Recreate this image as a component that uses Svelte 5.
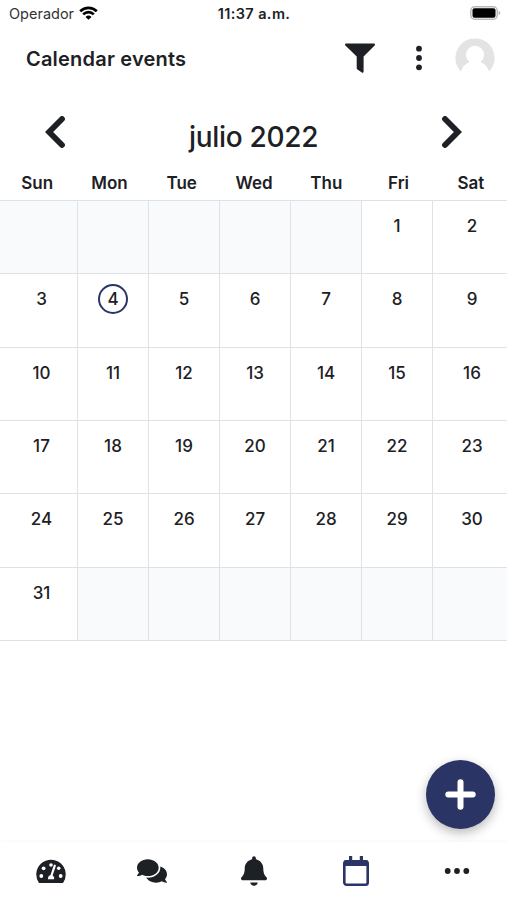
<script lang="ts">
  interface Day {
    num: number | null;
    today?: boolean;
  }

  const weekdays = ['Sun', 'Mon', 'Tue', 'Wed', 'Thu', 'Fri', 'Sat'];

  const firstWeekday = 5;
  const daysInMonth  = 31;
  const today        = 4;

  const days: Day[] = Array.from({ length: 42 }, (_, i) => {
    const num = i - firstWeekday + 1;
    return num >= 1 && num <= daysInMonth ? { num, today: num === today } : { num: null };
  });
</script>

<div class="screen">
  <div class="status">
    <div class="carrier">
      <span>Operador</span>
      <svg width="19" height="14" viewBox="0 0 19 14" fill="none" stroke="#000" stroke-width="2.7" aria-hidden="true">
        <path d="M1.2 5.2a11.8 11.8 0 0 1 16.6 0"/>
        <path d="M4.2 8.4a7.5 7.5 0 0 1 10.6 0"/>
        <path d="M9.5 13.8 6.5 10.9a4.3 4.3 0 0 1 6 0z" fill="#000" stroke="none"/>
      </svg>
    </div>
    <span class="clock">11:37 a.m.</span>
    <svg class="battery" width="31" height="14" viewBox="0 0 31 14" aria-hidden="true">
      <rect x="0.8" y="0.8" width="26.4" height="12.4" rx="3.8" fill="#fff" stroke="#bababa" stroke-width="1.5"/>
      <rect x="2.5" y="2.2" width="23" height="9.6" rx="2" fill="#000"/>
      <path d="M28.6 4.8c2.2.7 2.2 3.7 0 4.4z" fill="#b4b4b4"/>
    </svg>
  </div>

  <header>
    <h1>Calendar events</h1>
    <button class="filter" aria-label="Filter">
      <svg width="30" height="30" viewBox="0 0 30 30" fill="#1d2125" aria-hidden="true">
        <path d="M1.2 0.5h27.6c1.1 0 1.6 1.3.8 2.1L18.6 13.5v15c0 1.2-.9 1.7-1.8 1.1l-4.3-3c-.5-.3-.8-.8-.8-1.3V13.5L.4 2.6C-.4 1.8.1.5 1.2.5z"/>
      </svg>
    </button>
    <button class="more" aria-label="More options">
      <svg width="6" height="26" viewBox="0 0 6 26" fill="#1d2125" aria-hidden="true">
        <circle cx="3" cy="3.7" r="2.9"/>
        <circle cx="3" cy="13" r="2.9"/>
        <circle cx="3" cy="22.3" r="2.9"/>
      </svg>
    </button>
    <svg width="40" height="40" viewBox="0 0 40 40" aria-hidden="true">
      <path d="M6 33.7A19.6 19.6 0 1 1 34 33.7C32.5 28.5 29.5 25.5 25.5 24.3A9 9.3 0 1 0 14.5 24.3C10.5 25.5 7.5 28.5 6 33.7z" fill="#e3e3e4"/>
    </svg>
  </header>

  <div class="month">
    <button aria-label="Previous month">
      <svg width="20" height="32" viewBox="0 0 20 32" fill="none" stroke="#1d2125"
           stroke-width="5.8" stroke-linecap="round" stroke-linejoin="miter" aria-hidden="true">
        <polyline points="17 3 4.1 16 17 29"/>
      </svg>
    </button>
    <h2>julio 2022</h2>
    <button aria-label="Next month">
      <svg width="20" height="32" viewBox="0 0 20 32" fill="none" stroke="#1d2125"
           stroke-width="5.8" stroke-linecap="round" stroke-linejoin="miter" aria-hidden="true">
        <polyline points="3 3 15.9 16 3 29"/>
      </svg>
    </button>
  </div>

  <div class="weekdays">
    {#each weekdays as name}
      <span>{name}</span>
    {/each}
  </div>

  <div class="days">
    {#each days as day}
      <div class="day" class:blank={day.num === null}>
        {#if day.num !== null}
          <span class:today={day.today}>{day.num}</span>
        {/if}
      </div>
    {/each}
  </div>

  <div class="fab-row">
    <button class="fab" aria-label="New event">
      <svg width="31" height="31" viewBox="0 0 31 31" fill="none" stroke="#fff" stroke-width="6"
           stroke-linecap="round" aria-hidden="true">
        <path d="M15.5 3.3v24.4M3.3 15.5h24.4"/>
      </svg>
    </button>
  </div>

  <nav>
    <button aria-label="Dashboard">
      <svg width="30" height="30" viewBox="0 0 30 30" aria-hidden="true">
        <path d="M2.7 26.5A14.7 14.7 0 1 1 27.3 26.5Q26.9 27 26.2 27H3.8Q3.1 27 2.7 26.5z" fill="#1d2125"/>
        <g fill="#fff">
          <circle cx="5.3" cy="20" r="1.9"/>
          <circle cx="7.6" cy="12.3" r="1.9"/>
          <circle cx="15" cy="9" r="1.8"/>
          <circle cx="22.7" cy="12.3" r="1.8"/>
          <circle cx="24.7" cy="20" r="1.9"/>
          <path d="M12 23.3V21.5a3.1 3.1 0 0 1 6.1 0v1.8z"/>
        </g>
        <path d="M15.3 20 18.8 9.7" stroke="#fff" stroke-width="2.2" stroke-linecap="round"/>
      </svg>
    </button>
    <button aria-label="Messages">
      <svg width="30" height="30" viewBox="0 0 576 512" aria-hidden="true">
        <path fill="#1d2125" d="M416 192c0-88.400-93.100-160-208-160S0 103.600 0 192c0 34.300 14.100 65.900 38 92-13.400 30.200-35.500 54.200-35.800 54.500-2.200 2.300-2.800 5.700-1.500 8.700S4.800 352 8 352c36.600 0 66.900-12.300 88.700-25 32.200 15.700 70.300 25 111.300 25 114.900 0 208-71.600 208-160zm122 220c23.900-26 38-57.700 38-92 0-66.900-53.500-124.200-129.300-148.100.9 6.600 1.300 13.300 1.300 20.100 0 105.900-107.700 192-240 192-10.800 0-21.300-.8-31.700-1.900C207.800 439.600 281.800 480 368 480c41 0 79.100-9.200 111.300-25 21.800 12.700 52.100 25 88.700 25 3.200 0 6.100-1.900 7.300-4.800 1.300-2.900.7-6.300-1.500-8.700-.3-.3-22.400-24.200-35.800-54.500z"/>
      </svg>
    </button>
    <button aria-label="Notifications">
      <svg width="26" height="30" viewBox="0 0 448 512" aria-hidden="true">
        <path fill="#1d2125" d="M224 512c35.300 0 63.900-28.700 63.900-56H160c0 27.300 28.700 56 64 56zm215.400-149.700c-19.300-20.800-55.500-52-55.500-154.300 0-77.700-54.500-139.900-127.900-155.200V32c0-17.700-14.300-32-32-32s-32 14.300-32 32v20.800C118.600 68.100 64.100 130.300 64.100 208c0 102.300-36.200 133.500-55.500 154.300-6 6.400-8.700 14.200-8.600 21.700.1 16.400 13 32 32.100 32h383.800c19.100 0 32-15.600 32.100-32 .1-7.500-2.600-15.300-8.600-21.700z"/>
      </svg>
    </button>
    <button aria-label="Calendar">
      <svg width="28" height="32" viewBox="0 0 28 32" aria-hidden="true">
        <rect x="2.3" y="6.3" width="23.4" height="23.4" rx="2.2" fill="none" stroke="#2a3565" stroke-width="2.600"/>
        <path d="M2 5.500h24v5.500H2zM7 1h3.200v6H7zM17.800 1h3.200v6h-3.200z" fill="#2a3565"/>
      </svg>
    </button>
    <button aria-label="More">
      <svg width="26" height="6" viewBox="0 0 26 6" fill="#1d2125" aria-hidden="true">
        <circle cx="3.7" cy="3" r="2.9"/>
        <circle cx="13" cy="3" r="2.9"/>
        <circle cx="22.3" cy="3" r="2.9"/>
      </svg>
    </button>
  </nav>
</div>

<style>
  :global(body) { background: #fff; }

  .screen {
    width: 507px;
    height: 900px;
    display: flex;
    flex-direction: column;
    overflow: hidden;
    background: #fff;
    color: #1d2125;
    font-family: Inter, "Liberation Sans", sans-serif;
  }

  button {
    display: flex;
    padding: 0;
    border: none;
    background: none;
    cursor: pointer;
  }

  svg { display: block; flex: none; }

  .status {
    height: 27px;
    display: grid;
    grid-template-columns: 1fr auto 1fr;
    align-items: center;
    padding: 0 6px 0 9px;
    font-size: 14.5px;
  }

  .carrier {
    display: flex;
    align-items: center;
    gap: 5px;
    color: #333;
  }

  .carrier svg { margin-bottom: 2px; }

  .clock {
    margin-right: 2px;
    font-weight: 600;
    letter-spacing: 0.4px;
  }
  .battery { justify-self: end; margin-bottom: 1px; }

  header {
    height: 62px;
    display: flex;
    align-items: center;
    padding: 0 12px 0 26px;
  }

  h1 {
    flex: 1;
    margin: 1px 0 0;
    font-size: 20px;
    font-weight: 600;
    letter-spacing: 0.2px;
    white-space: nowrap;
  }

  .filter { margin-right: 41px; }
  .more { margin-right: 33px; }

  .month {
    height: 77px;
    display: flex;
    align-items: center;
    justify-content: space-between;
    padding: 9px 45px 0;
    box-sizing: border-box;
  }

  h2 {
    margin: 9px 0 0;
    font-size: 28px;
    font-weight: 500;
    letter-spacing: -0.3px;
    white-space: nowrap;
  }

  .weekdays {
    height: 34px;
    display: grid;
    grid-template-columns: repeat(7, 1fr);
    align-items: center;
    padding-left: 1px;
    font-size: 17px;
    font-weight: 600;
    text-align: center;
  }

  .days {
    height: 441px;
    display: grid;
    grid-template-columns: 78px repeat(5, 71px) 1fr;
    grid-template-rows: repeat(6, 1fr);
    border-top: 1px solid #dee2e6;
    box-sizing: border-box;
  }

  .day {
    display: flex;
    justify-content: center;
    align-items: flex-start;
    padding-top: 10px;
    border-right: 1px solid #dee2e6;
    border-bottom: 1px solid #dee2e6;
    font-size: 17px;
    font-weight: 450;
  }

  .day:nth-child(7n + 1) { padding-left: 6px; }
  .day:nth-child(7n) { padding-left: 4px; border-right: none; }
  .blank { background: #f8fafb; }

  .day span {
    width: 26px;
    height: 26px;
    border: 2px solid transparent;
    border-radius: 50%;
    line-height: 27px;
    text-align: center;
  }

  .day .today { border-color: #2a3565; }

  .fab-row {
    flex: 1;
    display: flex;
    justify-content: flex-end;
    align-items: flex-end;
    padding: 0 12px 13px 0;
  }

  .fab {
    width: 69px;
    height: 69px;
    align-items: center;
    justify-content: center;
    border-radius: 50%;
    background: #2a3565;
    box-shadow: 0 4px 11px rgba(0, 0, 0, 0.28);
  }

  nav {
    height: 58px;
    display: grid;
    grid-template-columns: repeat(5, 1fr);
    place-items: center;
    margin-right: -1px;
    background: #fff;
    box-shadow: 0 -1px 3px rgba(0, 0, 0, 0.03);
  }
</style>
